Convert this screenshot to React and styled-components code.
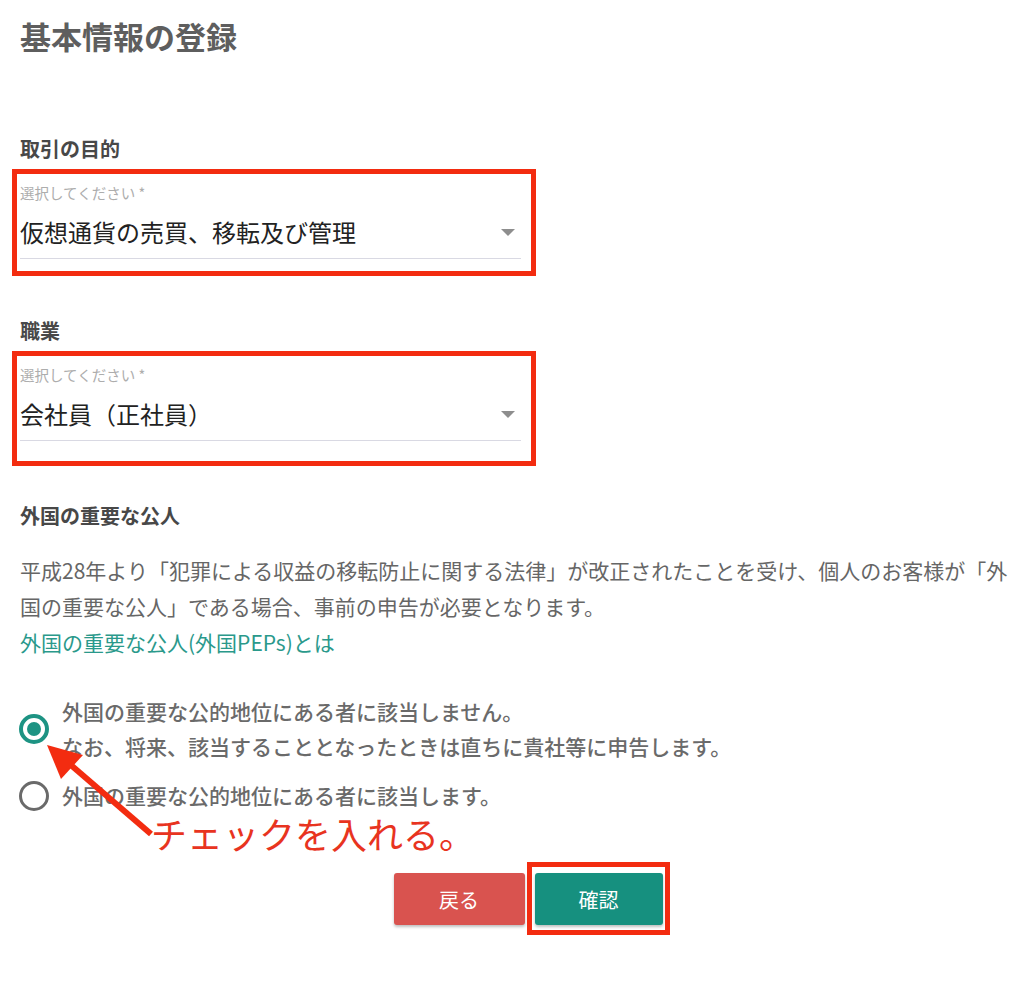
import React from "react";
import styled, { createGlobalStyle } from "styled-components";

const GlobalStyle = createGlobalStyle`
  html, body {
    margin: 0;
    padding: 0;
    background: #ffffff;
  }
  body {
    font-family: "Noto Sans CJK JP", "Noto Sans", sans-serif;
    color: #444;
  }
`;

const ANNOT = "#f32c10";

const Page = styled.div`
  position: relative;
  box-sizing: border-box;
  width: 1024px;
  padding: 18px 12px 40px 20px;
`;

const Title = styled.h1`
  margin: 0;
  font-size: 31px;
  line-height: 36px;
  font-weight: 700;
  color: #5e5e5e;
`;

const Section = styled.section`
  margin-top: ${(p) => p.$top}px;
`;

const Label = styled.div`
  font-size: 20px;
  line-height: 24px;
  font-weight: 700;
  color: #484848;
  margin-bottom: ${(p) => p.$gap ?? 8}px;
`;

const AnnotBox = styled.div`
  box-sizing: border-box;
  width: 524px;
  margin-left: -8px;
  border: 5px solid ${ANNOT};
  padding: 9px 10px ${(p) => p.$bottom ?? 12}px 3px;
`;

const Field = styled.div`
  display: flex;
  flex-direction: column;
`;

const Placeholder = styled.div`
  font-size: 14.5px;
  line-height: 20px;
  color: #adadad;
`;

const ValueRow = styled.div`
  display: flex;
  align-items: center;
  justify-content: space-between;
  margin-top: 13px;
  padding-bottom: 10px;
  border-bottom: 1px solid #d9d9e3;
`;

const Value = styled.div`
  font-size: 24px;
  line-height: 32px;
  color: #222;
`;

const Caret = styled.span`
  width: 0;
  height: 0;
  margin-right: 6px;
  border-left: 7px solid transparent;
  border-right: 7px solid transparent;
  border-top: 7px solid #8e8e8e;
`;

const Paragraph = styled.p`
  margin: 0;
  font-size: 21px;
  line-height: 36px;
  color: #666;
`;

const LinkText = styled.a`
  display: block;
  font-size: 21px;
  line-height: 36px;
  color: #2a998b;
  text-decoration: none;
`;

const RadioGroup = styled.div`
  display: flex;
  flex-direction: column;
  gap: 14px;
  margin-top: 34px;
`;

const Option = styled.label`
  display: flex;
  align-items: center;
  gap: 13px;
  margin-left: -1px;
`;

const RadioCircle = styled.span`
  box-sizing: border-box;
  flex: none;
  width: 30px;
  height: 30px;
  border-radius: 50%;
  border: ${(p) => (p.$checked ? "4px solid #1d9383" : "3px solid #6a6a6a")};
  display: flex;
  align-items: center;
  justify-content: center;
  &::after {
    content: "";
    display: ${(p) => (p.$checked ? "block" : "none")};
    width: 14px;
    height: 14px;
    border-radius: 50%;
    background: #1d9383;
  }
`;

const OptionText = styled.div`
  font-size: 21px;
  line-height: 35px;
  font-weight: 500;
  color: #6a6a6a;
`;

const ButtonRow = styled.div`
  display: flex;
  justify-content: center;
  gap: 10px;
  margin-top: 60px;
  padding-left: 24px;
`;

const Button = styled.button`
  box-sizing: border-box;
  width: ${(p) => p.$w}px;
  height: 52px;
  border: none;
  border-radius: 3px;
  background: ${(p) => p.$bg};
  color: #fff;
  font-family: "Noto Sans CJK JP", sans-serif;
  font-size: 20px;
  box-shadow: 0 2px 3px rgba(0, 0, 0, 0.25);
`;

const Framed = styled.div`
  position: relative;
  &::after {
    content: "";
    position: absolute;
    top: -11px;
    bottom: -10px;
    left: -8px;
    right: -7px;
    border: 5px solid ${ANNOT};
    pointer-events: none;
  }
`;

const ArrowSvg = styled.svg`
  position: absolute;
  left: 0;
  top: 700px;
  overflow: visible;
`;

const Callout = styled.div`
  position: absolute;
  left: 151px;
  top: 815px;
  font-size: 36px;
  line-height: 36px;
  color: #e8341f;
  white-space: nowrap;
`;

function SelectField({ value, bottom }) {
  return (
    <AnnotBox $bottom={bottom}>
      <Field>
        <Placeholder>選択してください *</Placeholder>
        <ValueRow>
          <Value>{value}</Value>
          <Caret />
        </ValueRow>
      </Field>
    </AnnotBox>
  );
}

export default function App() {
  return (
    <>
      <GlobalStyle />
      <Page>
        <Title>基本情報の登録</Title>

        <Section $top={83}>
          <Label>取引の目的</Label>
          <SelectField value="仮想通貨の売買、移転及び管理" />
        </Section>

        <Section $top={43}>
          <Label>職業</Label>
          <SelectField value="会社員（正社員）" bottom={20} />
        </Section>

        <Section $top={38}>
          <Label $gap={24}>外国の重要な公人</Label>
          <Paragraph>
            平成28年より「犯罪による収益の移転防止に関する法律」が改正されたことを受け、個人のお客様が「外国の重要な公人」である場合、事前の申告が必要となります。
          </Paragraph>
          <LinkText href="#">外国の重要な公人(外国PEPs)とは</LinkText>

          <RadioGroup>
            <Option>
              <RadioCircle $checked />
              <OptionText>
                外国の重要な公的地位にある者に該当しません。
                <br />
                なお、将来、該当することとなったときは直ちに貴社等に申告します。
              </OptionText>
            </Option>
            <Option>
              <RadioCircle />
              <OptionText>外国の重要な公的地位にある者に該当します。</OptionText>
            </Option>
          </RadioGroup>
        </Section>

        <ButtonRow>
          <Button $w={131} $bg="#d9534f">戻る</Button>
          <Framed>
            <Button $w={128} $bg="#16907f">確認</Button>
          </Framed>
        </ButtonRow>

        <ArrowSvg width="200" height="160" viewBox="0 0 200 160">
          <line x1="72" y1="66" x2="151" y2="134" stroke={ANNOT} strokeWidth="6" />
          <polygon points="47,45 83,55 61,79" fill={ANNOT} />
        </ArrowSvg>
        <Callout>チェックを入れる。</Callout>
      </Page>
    </>
  );
}
